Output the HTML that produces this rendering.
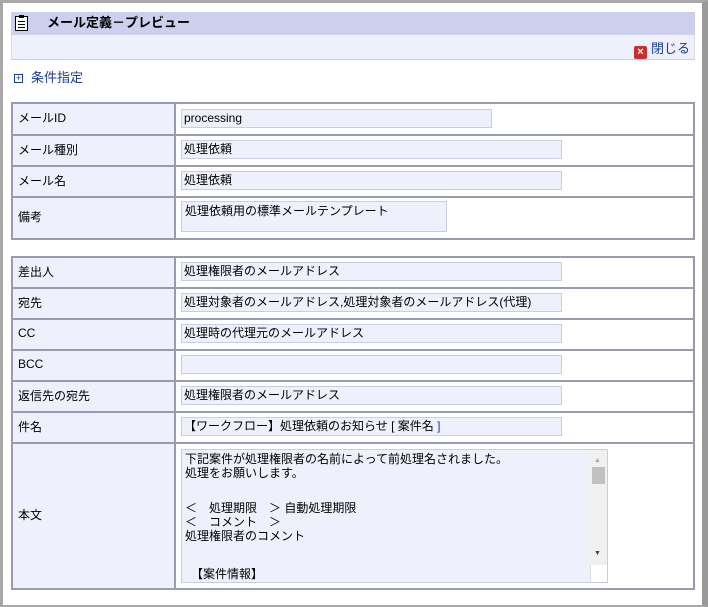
<!DOCTYPE html><html><head><meta charset="utf-8"><style>
*{box-sizing:border-box;margin:0;padding:0}
body{width:708px;height:607px;background:#fff;font-family:"Liberation Sans","Noto Sans CJK JP",sans-serif;font-size:12px;color:#000;position:relative;overflow:hidden}
.frame{position:absolute;left:0;top:0;width:708px;height:607px;border-top:3px solid #a8a8a8;border-left:3px solid #a8a8a8;border-right:6px solid #9a9a9a;border-bottom:2px solid #a8a8a8}
.hdr{position:absolute;left:11px;top:12px;width:684px;height:23px;background:#ccd0ec;font-weight:bold;font-size:13px;line-height:22px;padding-left:36px}
.ico{position:absolute;left:4px;top:4px;width:13px;height:15px;border:1px solid #000;background:#fff}
.ico i{position:absolute;left:2px;width:7px;height:1px;background:#000}
.sub{position:absolute;left:11px;top:35px;width:684px;height:25px;background:#eef1fc;border-bottom:1px solid #c8cce4;border-left:1px solid #dde;border-right:1px solid #dde}
.close{position:absolute;right:4px;top:3px;color:#1a3a9a;font-size:13px}
.xb{display:inline-block;width:13px;height:13px;background:#c83030;border-radius:2px;color:#fff;font-size:11px;line-height:13px;text-align:center;font-weight:bold;vertical-align:-2px;margin-right:4px}
.cond{position:absolute;left:14px;top:67px;color:#1a3a9a;font-size:13px}
.pb{display:inline-block;width:9px;height:9px;border:1px solid #1a3a9a;font-size:9px;line-height:7px;text-align:center;margin-right:8px;vertical-align:1px}
table{position:absolute;left:11px;width:684px;border-collapse:collapse;border:2px solid #9a9ab0}
td{border:2px solid #9a9ab0;padding:0 5px;vertical-align:middle}
td.l{width:163px;background:#eef1fc;padding-bottom:3px}
.in{height:19px;background:#eef1fc;border:1px solid #c8cce4;line-height:17px;padding-left:2px;white-space:nowrap;overflow:hidden;margin-top:-2px}
.ta{background:#eef1fc;border:1px solid #c8cce4;padding:2px 3px;line-height:14px;position:relative}
.ln{position:absolute;left:3px;white-space:nowrap}
</style></head><body>
<div class="frame"></div>
<div class="hdr"><div class="ico"><i style="top:4px"></i><i style="top:7px"></i><i style="top:10px"></i><i style="top:-2px;left:3px;width:5px;height:3px"></i></div>メール定義－プレビュー</div>
<div class="sub"><div class="close"><span class="xb">×</span>閉じる</div></div>
<div class="cond"><span class="pb">+</span>条件指定</div>
<table style="top:102px">
<tr style="height:32px"><td class="l">メールID</td><td><div class="in" style="width:311px">processing</div></td></tr>
<tr style="height:31px"><td class="l">メール種別</td><td><div class="in" style="width:381px">処理依頼</div></td></tr>
<tr style="height:31px"><td class="l">メール名</td><td><div class="in" style="width:381px">処理依頼</div></td></tr>
<tr style="height:42px"><td class="l">備考</td><td><div class="ta" style="width:266px;height:31px;margin-top:-3px">処理依頼用の標準メールテンプレート</div></td></tr>
</table>
<table style="top:256px">
<tr style="height:31px"><td class="l">差出人</td><td><div class="in" style="width:381px">処理権限者のメールアドレス</div></td></tr>
<tr style="height:31px"><td class="l">宛先</td><td><div class="in" style="width:381px">処理対象者のメールアドレス,処理対象者のメールアドレス(代理)</div></td></tr>
<tr style="height:31px"><td class="l">CC</td><td><div class="in" style="width:381px">処理時の代理元のメールアドレス</div></td></tr>
<tr style="height:31px"><td class="l">BCC</td><td><div class="in" style="width:381px"></div></td></tr>
<tr style="height:31px"><td class="l">返信先の宛先</td><td><div class="in" style="width:381px">処理権限者のメールアドレス</div></td></tr>
<tr style="height:31px"><td class="l">件名</td><td><div class="in" style="width:381px">【ワークフロー】処理依頼のお知らせ [ 案件名 <span style="color:#1a3a9a">]</span></div></td></tr>
<tr style="height:146px"><td class="l">本文</td><td><div class="ta" style="width:427px;height:134px;overflow:hidden">
<div class="ln" style="top:2px">下記案件が処理権限者の名前によって前処理名されました。</div>
<div class="ln" style="top:16px">処理をお願いします。</div>
<div class="ln" style="top:51px">＜　処理期限　＞ 自動処理期限</div>
<div class="ln" style="top:65px">＜　コメント　＞</div>
<div class="ln" style="top:79px">処理権限者のコメント</div>
<div class="ln" style="top:117px">　【案件情報】</div>
<div style="position:absolute;right:0;top:0;width:17px;height:117px;background:#f0f0f0"><div style="position:absolute;left:2px;top:17px;width:13px;height:17px;background:#c0c0c0"></div><div style="position:absolute;left:4px;bottom:6px;font-size:7px;color:#444">▼</div><div style="position:absolute;left:4px;top:4px;font-size:7px;color:#aaa">▲</div></div>
<div style="position:absolute;right:0;bottom:0;width:17px;height:17px;background:#fff;border-left:1px solid #ddd"></div>
</div></td></tr>
</table>
</body></html>
